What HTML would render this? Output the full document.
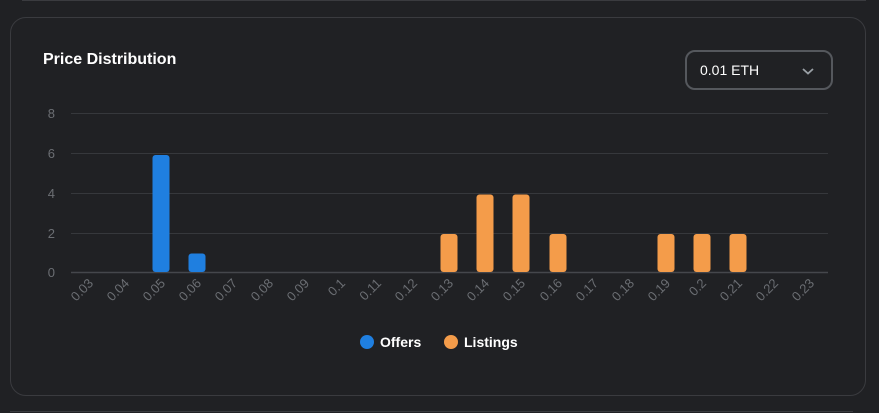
<!DOCTYPE html>
<html><head><style>
html,body{margin:0;width:879px;height:413px;overflow:hidden}
body{background:#202124;position:relative;font-family:"Liberation Sans",sans-serif}
.top{position:absolute;left:22px;top:0;width:844px;height:1px;background:#3a3b3f}
.bot{position:absolute;left:10px;top:411px;width:843px;height:1px;background:#3a3b3f}
.card{position:absolute;left:10px;top:17px;width:854px;height:377px;border:1px solid #3a3b3f;border-radius:16px;background:#202124}
.title{position:absolute;left:43px;top:51px;color:#fff;font-weight:bold;font-size:16px}
.dd{position:absolute;left:685px;top:50px;width:144px;height:36px;border:2px solid #55585d;border-radius:10px;color:#fff;font-size:14px}
.dd span{position:absolute;left:13px;top:10px}
</style></head><body>
<div class="top"></div><div class="bot"></div>
<div class="card"></div>
<div class="title">Price Distribution</div>
<div class="dd"><span>0.01 ETH</span>
<svg style="position:absolute;left:114px;top:14px" width="14" height="10"><path d="M2 3l5 4.5 5-4.5" stroke="#9aa0a6" stroke-width="1.8" fill="none"/></svg></div>
<svg width="879" height="413" style="position:absolute;left:0;top:0" font-family="Liberation Sans, sans-serif">
<g stroke="#36383c" stroke-width="1">
<line x1="71" x2="828" y1="113.5" y2="113.5"/><line x1="71" x2="828" y1="153.5" y2="153.5"/>
<line x1="71" x2="828" y1="193.5" y2="193.5"/><line x1="71" x2="828" y1="233.5" y2="233.5"/>
</g>
<line x1="71" x2="828" y1="272.5" y2="272.5" stroke="#45474c" stroke-width="1.5"/>
<g fill="#6b6e73" font-size="13" text-anchor="end">
<text x="55" y="118">8</text><text x="55" y="158">6</text><text x="55" y="198">4</text><text x="55" y="238">2</text><text x="55" y="277">0</text>
</g>
<g fill="#1f7fe0">
<rect x="152.5" y="155" width="17" height="117" rx="3"/>
<rect x="188.5" y="253.5" width="17" height="18.5" rx="3"/>
</g>
<g fill="#f49c4a">
<rect x="440.5" y="234" width="17" height="38" rx="3"/>
<rect x="476.5" y="194.5" width="17" height="77.5" rx="3"/>
<rect x="512.5" y="194.5" width="17" height="77.5" rx="3"/>
<rect x="549.5" y="234" width="17" height="38" rx="3"/>
<rect x="657.5" y="234" width="17" height="38" rx="3"/>
<rect x="693.5" y="234" width="17" height="38" rx="3"/>
<rect x="729.5" y="234" width="17" height="38" rx="3"/>
</g>
<g fill="#6b6e73" font-size="13" text-anchor="end">
<text transform="translate(94,284) rotate(-45)">0.03</text>
<text transform="translate(130,284) rotate(-45)">0.04</text>
<text transform="translate(166,284) rotate(-45)">0.05</text>
<text transform="translate(202,284) rotate(-45)">0.06</text>
<text transform="translate(238,284) rotate(-45)">0.07</text>
<text transform="translate(274,284) rotate(-45)">0.08</text>
<text transform="translate(310,284) rotate(-45)">0.09</text>
<text transform="translate(346,284) rotate(-45)">0.1</text>
<text transform="translate(382,284) rotate(-45)">0.11</text>
<text transform="translate(418,284) rotate(-45)">0.12</text>
<text transform="translate(454,284) rotate(-45)">0.13</text>
<text transform="translate(490,284) rotate(-45)">0.14</text>
<text transform="translate(526,284) rotate(-45)">0.15</text>
<text transform="translate(563,284) rotate(-45)">0.16</text>
<text transform="translate(599,284) rotate(-45)">0.17</text>
<text transform="translate(635,284) rotate(-45)">0.18</text>
<text transform="translate(671,284) rotate(-45)">0.19</text>
<text transform="translate(707,284) rotate(-45)">0.2</text>
<text transform="translate(743,284) rotate(-45)">0.21</text>
<text transform="translate(779,284) rotate(-45)">0.22</text>
<text transform="translate(815,284) rotate(-45)">0.23</text>
</g>
<circle cx="367" cy="342" r="7" fill="#1f7fe0"/>
<text x="380" y="347" fill="#fff" font-size="14" font-weight="bold">Offers</text>
<circle cx="451" cy="342" r="7" fill="#f49c4a"/>
<text x="464" y="347" fill="#fff" font-size="14" font-weight="bold">Listings</text>
</svg>
</body></html>
